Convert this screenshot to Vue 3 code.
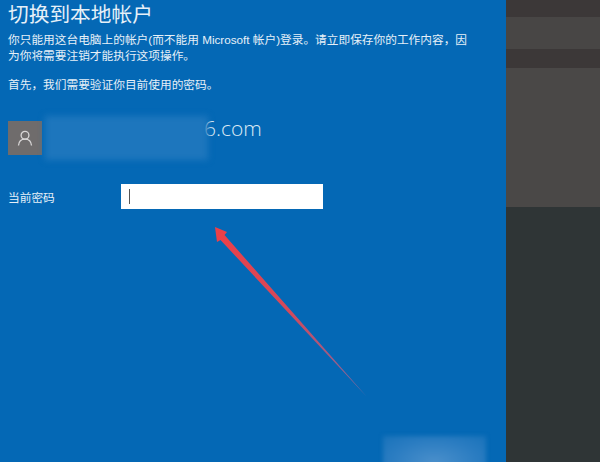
<script setup>
const userDomain = '6.com'
</script>

<template>
  <div class="page">
    <main class="panel">
      <h1 class="title">切换到本地帐户</h1>
      <p class="intro">你只能用这台电脑上的帐户(而不能用 Microsoft 帐户)登录。请立即保存你的工作内容，因为你将需要注销才能执行这项操作。</p>
      <p class="first">首先，我们需要验证你目前使用的密码。</p>

      <div class="account">
        <div class="avatar">
          <svg width="16" height="16" viewBox="0 0 16 16" fill="none" stroke="#d8d6d6" stroke-width="1.3">
            <circle cx="8" cy="5.2" r="3.9" />
            <path d="M1.5 15.5c.3-3.9 2.8-6.4 6.5-6.4s6.2 2.5 6.5 6.4" />
          </svg>
        </div>
        <div class="email">
          <span class="smudge"></span>
          <span class="domain">{{ userDomain }}</span>
        </div>
      </div>

      <div class="field">
        <label class="label">当前密码</label>
        <div class="input"><span class="caret"></span></div>
      </div>

      <svg class="arrow" width="170" height="180" viewBox="0 0 170 180">
        <defs>
          <linearGradient id="shaft" gradientUnits="userSpaceOnUse" x1="0" y1="0" x2="153" y2="171">
            <stop offset="0" stop-color="#ee3f47" />
            <stop offset="0.5" stop-color="#d24a5c" />
            <stop offset="1" stop-color="#7a6aa4" />
          </linearGradient>
        </defs>
        <path d="M1 1 L13 6 L10.5 9 L153 171 L6.5 14 L3 16 Z" fill="url(#shaft)" />
      </svg>

      <div class="next-glow"></div>
    </main>

    <aside class="side">
      <div class="band dark1"></div>
      <div class="band grey1"></div>
      <div class="band dark2"></div>
      <div class="band grey2"></div>
      <div class="band teal"></div>
    </aside>
  </div>
</template>

<style scoped>
.page {
  display: flex;
  width: 600px;
  height: 462px;
  overflow: hidden;
  font-family: "Liberation Sans", "Noto Sans CJK SC", sans-serif;
}

.panel {
  position: relative;
  flex: 1;
  padding: 0 0 0 8px;
  background: #0468b5;
  color: #e6f0f8;
}

.title {
  margin: 0;
  font-size: 20.7px;
  line-height: 30px;
  font-weight: 400;
}

.intro {
  width: 466px;
  margin: 2px 0 0;
  font-size: 11.7px;
  line-height: 16px;
}

.first {
  margin: 13px 0 0;
  font-size: 11.7px;
  line-height: 16px;
}

.account {
  display: flex;
  align-items: center;
  gap: 3px;
  margin-top: 21px;
}

.avatar {
  display: flex;
  align-items: center;
  justify-content: center;
  width: 34px;
  height: 34px;
  background: #6f6c6c;
}

.email {
  display: flex;
  align-items: center;
  font-family: "Open Sans", sans-serif;
  font-size: 21px;
  font-weight: 300;
  color: #dce9f4;
}

.smudge {
  position: relative;
  z-index: 1;
  width: 163px;
  height: 44px;
  background: #1d76bd;
  filter: blur(3px);
}

.domain {
  margin-left: -4px;
  margin-bottom: 20px;
}

.field {
  display: flex;
  align-items: center;
  margin-top: 22px;
}

.label {
  width: 113px;
  font-size: 11.7px;
}

.input {
  display: flex;
  align-items: center;
  width: 202px;
  height: 25px;
  background: #fff;
}

.caret {
  width: 1px;
  height: 15px;
  margin-left: 8px;
  background: #555;
}

.arrow {
  position: absolute;
  left: 214px;
  top: 226px;
}

.next-glow {
  position: absolute;
  left: 383px;
  top: 436px;
  width: 103px;
  height: 40px;
  background: radial-gradient(ellipse at 50% 65%, #4a8fcb 0%, #2a7cc1 60%, #1872ba 100%);
  filter: blur(2px);
}

.side {
  display: flex;
  flex-direction: column;
  width: 94px;
}

.band.dark1 { height: 17px; background: #3c3838; }
.band.grey1 { height: 32px; background: #484645; }
.band.dark2 { height: 19px; background: #3c3838; }
.band.grey2 { height: 139px; background: #4a4847; }
.band.teal { flex: 1; background: #2f3536; }
</style>
